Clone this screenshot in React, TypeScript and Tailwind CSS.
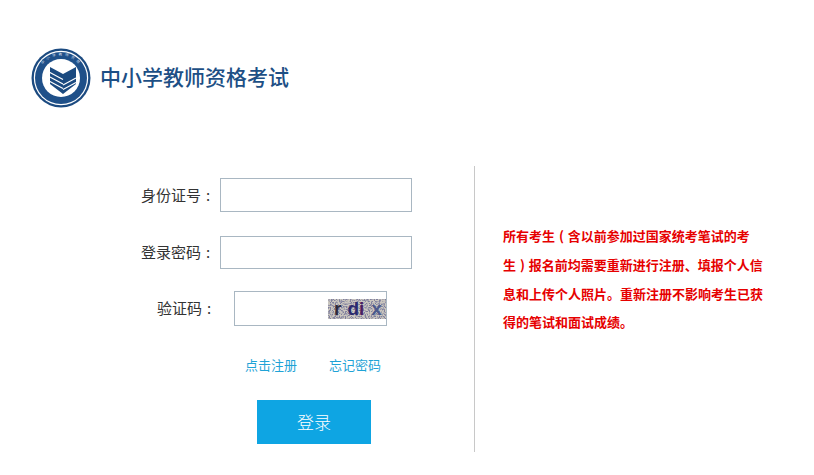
import React from 'react';

const cjk = "font-['Noto_Sans_CJK_SC','Liberation_Sans',sans-serif]";

function Logo() {
  return (
    <svg width="60" height="60" viewBox="0 0 60 60" className="shrink-0">
      <circle cx="30" cy="30" r="29.5" fill="#1b4a80" />
      <circle cx="30" cy="30" r="27.2" fill="#fff" />
      <circle cx="30" cy="30" r="26" fill="#1f5089" />
      <circle cx="30" cy="30" r="19" fill="#fff" />
      <path id="logo-arc" d="M7.5 30a22.5 22.5 0 0 1 45 0" fill="none" />
      <text fontSize="3.6" fill="#cfdcea" letterSpacing="2.6" fontFamily="Noto Sans CJK SC">
        <textPath href="#logo-arc" startOffset="20%">中小学教师资格</textPath>
      </text>
      <path d="M19 19l13 7 13-7v17L32 46 19 36z" fill="#1b4a80" />
      <path d="M18 24l14 7.500M18 28.500l14 7.500M18 33l14 7.500" stroke="#fff" strokeWidth="1.200" fill="none" />
      <path d="M32 37l13-7M32 41.500l13-7" stroke="#fff" strokeWidth="1.100" fill="none" />
    </svg>
  );
}

function Captcha() {
  return (
    <div className="relative flex h-[20px] w-[58px] items-center overflow-hidden bg-[#cbc7bf] font-['Liberation_Sans',sans-serif] text-[19px] leading-none font-bold">
      {/* speckle behind the letters */}
      <svg className="absolute inset-0" width="58" height="20">
        <filter id="speckle" colorInterpolationFilters="sRGB">
          <feTurbulence type="fractalNoise" baseFrequency="0.8" numOctaves="2" seed="4" />
          <feColorMatrix values="0 0 0 0 0.5  0 0 0 0 0.5  0 0 0 0 0.62  5 0 0 0 -2.2" />
        </filter>
        <rect width="58" height="20" filter="url(#speckle)" />
      </svg>
      <span className="relative ml-[6px] text-[#2d2a3a]">r</span>
      <span className="relative ml-[6px] text-[#2b2a6e]">d</span>
      <span className="relative text-[#4a2060]">i</span>
      <span className="relative ml-[7px] text-[#4c5a8c]">x</span>
    </div>
  );
}

function Label({ text, className }: { text: string; className: string }) {
  return (
    <label className={`flex text-[15px] text-[#333] ${className}`}>
      {text}
      <span className="ml-[5px]">:</span>
    </label>
  );
}

export default function App() {
  return (
    <div className={`h-[475px] w-[814px] overflow-hidden bg-white ${cjk}`}>
      {/* Logo */}
      <header className="flex h-[166px] items-start gap-[9px] pt-[48px] pl-[31px]">
        <Logo />
        <h1 className="mt-[13px] text-[21px] leading-[30px] font-medium text-[#1d4f85]">中小学教师资格考试</h1>
      </header>

      <main className="flex">
        {/* Login form */}
        <div className="h-[286px] w-[475px] border-r border-[#c8c8c8]">
          <div className="flex items-center pt-[12px] pl-[141px]">
            <Label text="身份证号" className="w-[79px]" />
            <input className="h-[34px] w-[192px] border border-[#a9b7c2] bg-white" />
          </div>
          <div className="mt-[24px] flex items-center pl-[141px]">
            <Label text="登录密码" className="w-[79px]" />
            <input className="h-[33px] w-[192px] border border-[#a9b7c2] bg-white" />
          </div>
          <div className="mt-[22px] flex items-center pl-[157px]">
            <Label text="验证码" className="w-[77px]" />
            <div className="flex h-[35px] w-[153px] items-center justify-end border border-[#a9b7c2]">
              <Captcha />
            </div>
          </div>
          <div className="mt-[29px] flex gap-[32px] pl-[245px] text-[13px] leading-[20px] text-[#1fa3d6]">
            <a href="#">点击注册</a>
            <a href="#">忘记密码</a>
          </div>
          <button className="mt-[25px] ml-[257px] block h-[44px] w-[114px] bg-[#0ea5e3] text-[17px] font-light text-white">
            登录
          </button>
        </div>

        {/* Notice */}
        <p className="mt-[56px] ml-[28px] h-fit w-[262px] text-[13px] leading-[28.8px] font-bold [word-spacing:1px] text-[#e60000]">
          {'所有考生\u00a0(\u00a0含以前参加过国家统考笔试的考生\u00a0)\u00a0报名前均需要重新进行注册、填报个人信息和上传个人照片。重新注册不影响考生已获得的笔试和面试成绩。'}
        </p>
      </main>
    </div>
  );
}
